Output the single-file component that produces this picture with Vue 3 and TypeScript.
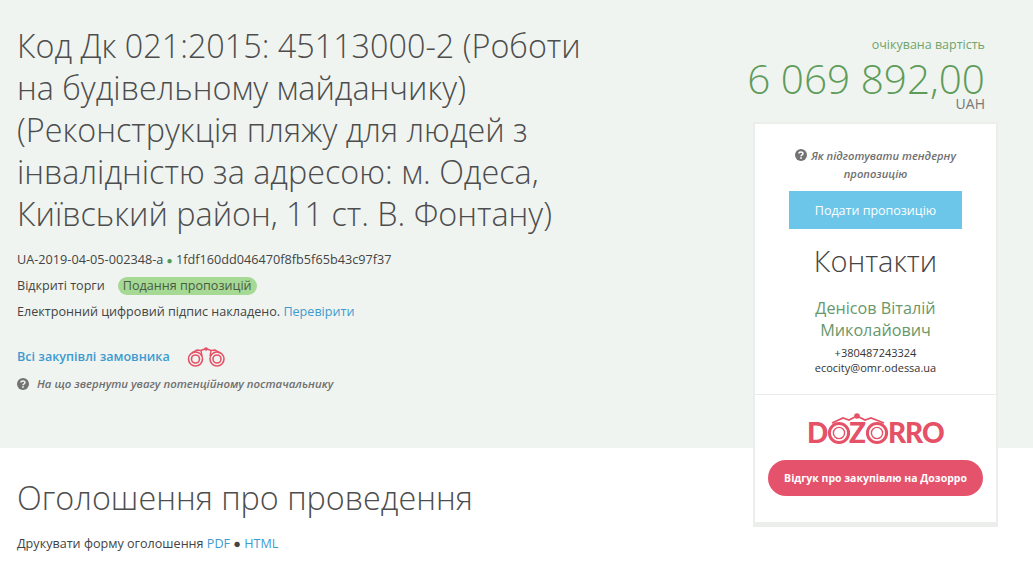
<script setup lang="ts">
const title = 'Код Дк 021:2015: 45113000-2 (Роботи на будівельному майданчику) (Реконструкція пляжу для людей з інвалідністю за адресою: м. Одеса, Київський район, 11 ст. В. Фонтану)'
</script>

<template>
  <div class="page">
    <header class="hero">
      <section class="main">
        <h1 class="title">{{ title }}</h1>
        <p class="line ids">UA-2019-04-05-002348-a <span class="dot">●</span> 1fdf160dd046470f8fb5f65b43c97f37</p>
        <p class="line status">
          <span>Відкриті торги</span>
          <span class="badge">Подання пропозицій</span>
        </p>
        <p class="line sign">Електронний цифровий підпис накладено. <a class="link">Перевірити</a></p>
        <div class="buyer">
          <a class="link strong">Всі закупівлі замовника</a>
          <svg class="binoc" width="38" height="20" viewBox="0 0 38 20" fill="none" stroke="#e55166">
            <circle cx="8.5" cy="12" r="7" stroke-width="1.6" />
            <circle cx="8.5" cy="12" r="4" stroke-width="1.6" />
            <circle cx="30" cy="12" r="7" stroke-width="1.6" />
            <circle cx="30" cy="12" r="4" stroke-width="1.6" />
            <path d="M5 6 L10 3 L14 3.5 L19 1.5 L24 3.5 L28 3 L33 6" stroke-width="1.6" />
            <path d="M14 4 L15 9 M24 4 L23 9" stroke-width="1.4" />
            <circle cx="19" cy="2" r="1.8" fill="#e55166" stroke="none" />
          </svg>
        </div>
        <p class="hint left">
          <svg class="q" width="12" height="12" viewBox="0 0 12 12"><circle cx="6" cy="6" r="6" fill="#737373" /><path d="M4 4.6 C4 2.4 8 2.4 8 4.5 C8 5.9 6 5.7 6 7.2" fill="none" stroke="#f0f4f1" stroke-width="1.5" /><rect x="5.2" y="8.2" width="1.6" height="1.6" fill="#f0f4f1" /></svg>
          <em>На що звернути увагу потенційному постачальнику</em>
        </p>
      </section>

      <aside class="side">
        <div class="price">
          <div class="price-label">очікувана вартість</div>
          <div class="price-value">6 069 892,00</div>
          <div class="price-cur">UAH</div>
        </div>
        <div class="card">
          <div class="card-top">
            <p class="hint center">
              <svg class="q" width="12" height="12" viewBox="0 0 12 12"><circle cx="6" cy="6" r="6" fill="#737373" /><path d="M4 4.6 C4 2.4 8 2.4 8 4.5 C8 5.9 6 5.7 6 7.2" fill="none" stroke="#fff" stroke-width="1.5" /><rect x="5.2" y="8.2" width="1.6" height="1.6" fill="#fff" /></svg>
              <em>Як підготувати тендерну пропозицію</em>
            </p>
            <button class="submit">Подати пропозицію</button>
            <h2 class="contacts">Контакти</h2>
            <div class="person">Денісов Віталій Миколайович</div>
            <div class="small">+380487243324</div>
            <div class="small">ecocity@omr.odessa.ua</div>
          </div>
          <div class="card-bottom">
            <svg class="logo" width="138" height="38" viewBox="0 0 138 38">
              <g fill="none" stroke="#e55166">
                <path d="M25 10 L36 5 L42 7 L50 3 L58 7 L64 5 L77 10" stroke-width="1.7" />
                <circle cx="32" cy="20" r="9.6" stroke-width="3" fill="#fff" />
                <circle cx="70" cy="20" r="9.6" stroke-width="3" fill="#fff" />
                <circle cx="32" cy="20" r="5.6" stroke-width="1.4" />
                <circle cx="70" cy="20" r="5.6" stroke-width="1.4" />
              </g>
              <circle cx="50" cy="3" r="2.8" fill="#e55166" />
              <text class="logo-text" x="0" y="30">D</text>
              <text class="logo-text" x="42" y="30">Z</text>
              <text class="logo-text" x="81" y="30">R</text>
              <text class="logo-text" x="98" y="30">R</text>
              <text class="logo-text" x="115" y="30">O</text>
            </svg>
            <button class="dozorro">Відгук про закупівлю на Дозорро</button>
          </div>
        </div>
      </aside>
    </header>

    <section class="notice">
      <h2 class="notice-title">Оголошення про проведення</h2>
      <p class="line print">Друкувати форму оголошення <a class="link">PDF</a> ● <a class="link">HTML</a></p>
    </section>
  </div>
</template>

<style>
html, body { margin: 0; background: #fff; overflow: hidden; }
</style>

<style scoped>
.page {
  width: 1033px;
  height: 585px;
  overflow: hidden;
  font-family: "Open Sans", "Noto Sans", sans-serif;
  color: #444;
}
.hero {
  height: 448px;
  background: #f0f4f1;
  display: flex;
  justify-content: space-between;
  box-sizing: border-box;
  padding: 24px 35px 0 17px;
}
.main { width: 575px; }
.title {
  margin: 0 0 13px;
  font-size: 32.35px;
  line-height: 42px;
  font-weight: 300;
  color: #4d4d4d;
}
.line {
  margin: 0;
  font-size: 12.6px;
  line-height: 26px;
  color: #444;
}
.ids { height: 26px; font-size: 12.7px; margin-top: -1px; margin-bottom: 1px; }
.dot { color: #4f9a55; font-size: 10px; }
.status { display: flex; align-items: center; gap: 13px; }
.badge {
  background: #a5d994;
  border-radius: 9px;
  padding: 0 5px;
  line-height: 18px;
  color: #4a5a45;
}
.link { color: #3e9bcf; }
.strong { font-weight: 600; }
.buyer {
  display: flex;
  align-items: center;
  gap: 17px;
  margin-top: 19px;
  font-size: 12.6px;
  height: 24px;
}
.binoc { margin-top: 2px; }
.hint {
  margin: 0;
  font-size: 11.4px;
  line-height: 18px;
  font-weight: 600;
  color: #6f6f6f;
}
.hint em { font-style: italic; }
.hint.left { display: flex; align-items: center; gap: 8px; margin-top: 7px; }
.q { vertical-align: -1px; }
.side { width: 245px; }
.price { text-align: right; margin: 12px 13px 0 -40px; }
.price-label { font-size: 12.5px; line-height: 18px; color: #6fa46b; }
.price-value { font-size: 40.5px; line-height: 36px; margin-top: 7px; font-weight: 300; color: #5f9c5a; white-space: nowrap; }
.price-cur { font-size: 14px; line-height: 14px; color: #777; }
.card {
  margin-top: 11px;
  width: 245px;
  height: 405px;
  box-sizing: border-box;
  background: #fff;
  border: 2px solid #eceeec;
  border-bottom-width: 5px;
  position: relative;
}
.card-top {
  height: 271px;
  box-sizing: border-box;
  padding: 23px 34px 0;
  text-align: center;
  border-bottom: 1px solid #e9ecea;
}
.card-top .hint { margin: 0 0 8px; font-size: 11.2px; }
.card-top .hint .q { margin-right: 4px; }
.submit {
  display: block;
  width: 173px;
  height: 38px;
  margin: 0 auto;
  border: 0;
  background: #6bc6ea;
  color: #fff;
  font: 400 12.5px "Open Sans", sans-serif;
}
.contacts {
  margin: 13px -20px 0;
  font-size: 29px;
  line-height: 38px;
  font-weight: 300;
  color: #444;
}
.person {
  margin: 17px -10px 4px;
  font-size: 16.2px;
  line-height: 22px;
  color: #68976a;
}
.small { font-size: 11px; line-height: 15px; color: #333; }
.card-bottom {
  display: flex;
  flex-direction: column;
  align-items: center;
  padding-top: 18px;
}
.logo-text {
  font: 900 28px "Lato", sans-serif;
  fill: #e55166;
}
.dozorro {
  width: 215px;
  height: 36px;
  margin-top: 9px;
  border: 0;
  border-radius: 18px;
  background: #e5526b;
  color: #fff;
  font: 700 10.5px "Open Sans", sans-serif;
}
.notice { padding: 28px 17px 0; }
.notice-title {
  margin: 0 0 13px;
  font-size: 32.35px;
  line-height: 42px;
  font-weight: 300;
  color: #4d4d4d;
}
</style>
